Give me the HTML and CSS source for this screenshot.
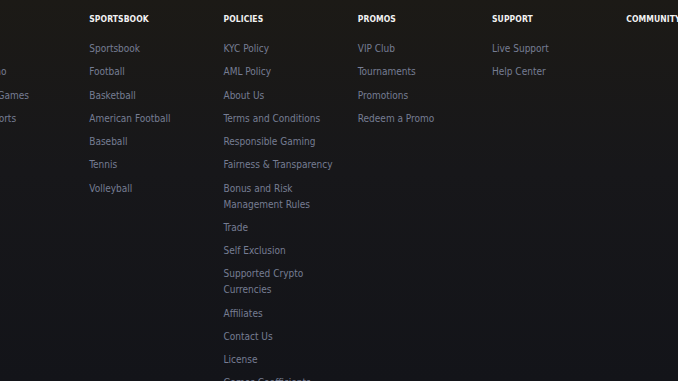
FILE: index.html
```html
<!DOCTYPE html>
<html>
<head>
<meta charset="utf-8">
<link rel="stylesheet" href="styles.css">
</head>
<body>
<footer class="footer">
  <div class="cols">
    <div class="col">
      <h4 class="col-title">CASINO</h4>
      <ul class="links">
        <li>Slots</li>
        <li>Live Casino</li>
        <li>Featured Games</li>
        <li>Virtual Sports</li>
      </ul>
    </div>
    <div class="col">
      <h4 class="col-title">SPORTSBOOK</h4>
      <ul class="links">
        <li>Sportsbook</li>
        <li>Football</li>
        <li>Basketball</li>
        <li>American Football</li>
        <li>Baseball</li>
        <li>Tennis</li>
        <li>Volleyball</li>
      </ul>
    </div>
    <div class="col">
      <h4 class="col-title">POLICIES</h4>
      <ul class="links">
        <li>KYC Policy</li>
        <li>AML Policy</li>
        <li>About Us</li>
        <li>Terms and Conditions</li>
        <li>Responsible Gaming</li>
        <li>Fairness &amp; Transparency</li>
        <li>Bonus and Risk Management Rules</li>
        <li>Trade</li>
        <li>Self Exclusion</li>
        <li>Supported Crypto Currencies</li>
        <li>Affiliates</li>
        <li>Contact Us</li>
        <li>License</li>
        <li>Games Coefficients</li>
      </ul>
    </div>
    <div class="col">
      <h4 class="col-title">PROMOS</h4>
      <ul class="links">
        <li>VIP Club</li>
        <li>Tournaments</li>
        <li>Promotions</li>
        <li>Redeem a Promo</li>
      </ul>
    </div>
    <div class="col">
      <h4 class="col-title">SUPPORT</h4>
      <ul class="links">
        <li>Live Support</li>
        <li>Help Center</li>
      </ul>
    </div>
    <div class="col">
      <h4 class="col-title">COMMUNITY</h4>
      <ul class="links"></ul>
    </div>
  </div>
</footer>
</body>
</html>
```

FILE: styles.css
```css
html, body {
  margin: 0;
  padding: 0;
  height: 100%;
}
body {
  background: linear-gradient(180deg, #1c1a16 0%, #17171a 45%, #131419 100%);
  font-family: "DejaVu Sans Condensed", "DejaVu Sans", sans-serif;
  overflow: hidden;
}
.footer {
  padding-top: 11px;
}
.cols {
  display: flex;
  gap: 20.25px;
  margin-left: -45px;
}
.col {
  flex: 0 0 114px;
  width: 114px;
}
.col-title {
  margin: 0;
  font-size: 8.5px;
  line-height: 16px;
  font-weight: bold;
  color: #f2f2f2;
  letter-spacing: 0.1px;
  white-space: nowrap;
}
.links {
  list-style: none;
  margin: 14px 0 0;
  padding: 0;
  display: flex;
  flex-direction: column;
  gap: 7.25px;
}
.links li {
  font-size: 10px;
  line-height: 16px;
  color: #767d93;
}
```
